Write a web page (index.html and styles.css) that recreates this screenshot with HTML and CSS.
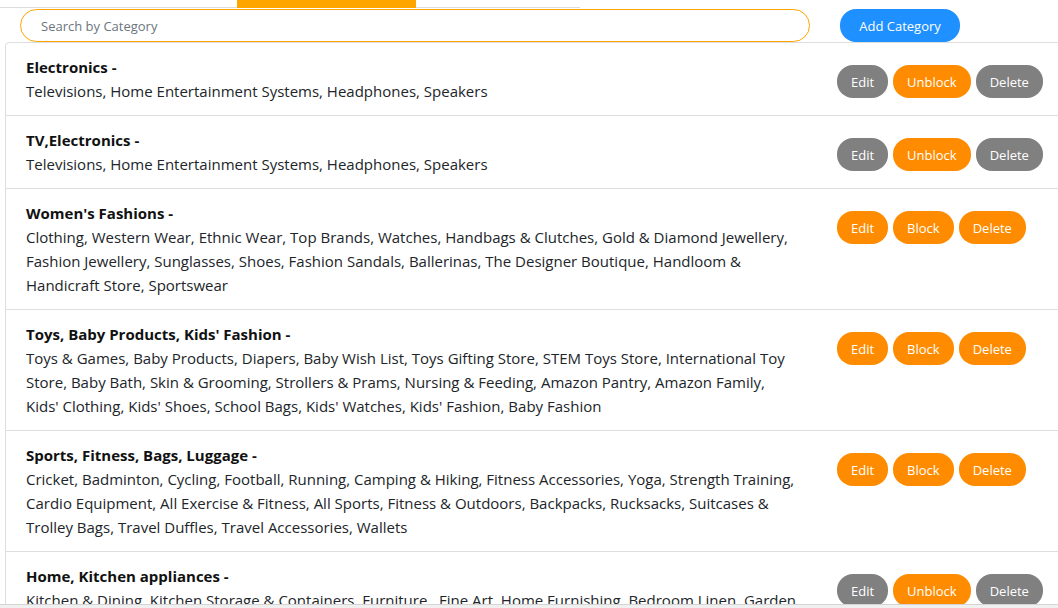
FILE: index.html
```html
<!DOCTYPE html>
<html lang="en">
<head>
<meta charset="utf-8">
<title>Categories</title>
<link rel="stylesheet" href="styles.css">
</head>
<body>
<div class="tabs">
  <div class="tab-line">
    <span class="tab tab-gap"></span>
    <span class="tab tab-active"></span>
  </div>
</div>
<div class="toolbar">
  <input class="search" type="text" placeholder="Search by Category">
  <button class="btn-add">Add Category</button>
</div>
<div class="list">
  <div class="row">
    <div class="info">
      <div class="title">Electronics -</div>
      <div class="desc">Televisions, Home Entertainment Systems, Headphones, Speakers</div>
    </div>
    <div class="actions">
      <button class="btn gray">Edit</button>
      <button class="btn orange">Unblock</button>
      <button class="btn gray">Delete</button>
    </div>
  </div>
  <div class="row">
    <div class="info">
      <div class="title">TV,Electronics -</div>
      <div class="desc">Televisions, Home Entertainment Systems, Headphones, Speakers</div>
    </div>
    <div class="actions">
      <button class="btn gray">Edit</button>
      <button class="btn orange">Unblock</button>
      <button class="btn gray">Delete</button>
    </div>
  </div>
  <div class="row">
    <div class="info">
      <div class="title">Women's Fashions -</div>
      <div class="desc">Clothing, Western Wear, Ethnic Wear, Top Brands, Watches, Handbags &amp; Clutches, Gold &amp; Diamond Jewellery, Fashion Jewellery, Sunglasses, Shoes, Fashion Sandals, Ballerinas, The Designer Boutique, Handloom &amp; Handicraft Store, Sportswear</div>
    </div>
    <div class="actions">
      <button class="btn orange">Edit</button>
      <button class="btn orange">Block</button>
      <button class="btn orange">Delete</button>
    </div>
  </div>
  <div class="row">
    <div class="info">
      <div class="title">Toys, Baby Products, Kids' Fashion -</div>
      <div class="desc">Toys &amp; Games, Baby Products, Diapers, Baby Wish List, Toys Gifting Store, STEM Toys Store, International Toy Store, Baby Bath, Skin &amp; Grooming, Strollers &amp; Prams, Nursing &amp; Feeding, Amazon Pantry, Amazon Family, Kids'&nbsp;Clothing, Kids' Shoes, School Bags, Kids' Watches, Kids' Fashion, Baby Fashion</div>
    </div>
    <div class="actions">
      <button class="btn orange">Edit</button>
      <button class="btn orange">Block</button>
      <button class="btn orange">Delete</button>
    </div>
  </div>
  <div class="row">
    <div class="info">
      <div class="title">Sports, Fitness, Bags, Luggage -</div>
      <div class="desc">Cricket, Badminton, Cycling, Football, Running, Camping &amp; Hiking, Fitness Accessories, Yoga, Strength Training, Cardio Equipment, All Exercise &amp; Fitness, All Sports, Fitness &amp; Outdoors, Backpacks, Rucksacks, Suitcases &amp; Trolley Bags, Travel Duffles, Travel Accessories, Wallets</div>
    </div>
    <div class="actions">
      <button class="btn orange">Edit</button>
      <button class="btn orange">Block</button>
      <button class="btn orange">Delete</button>
    </div>
  </div>
  <div class="row">
    <div class="info">
      <div class="title">Home, Kitchen appliances -</div>
      <div class="desc">Kitchen &amp; Dining, Kitchen Storage &amp; Containers, Furniture , Fine Art, Home Furnishing, Bedroom Linen, Garden &amp; Outdoors, Home Improvement, Indoor Lighting</div>
    </div>
    <div class="actions">
      <button class="btn gray">Edit</button>
      <button class="btn orange">Unblock</button>
      <button class="btn gray">Delete</button>
    </div>
  </div>
</div>
<div class="hscroll"></div>
</body>
</html>
```
FILE: styles.css
```css
html, body {
  margin: 0;
  padding: 0;
  overflow: hidden;
  background: #fff;
  font-family: "Open Sans", "Noto Sans", sans-serif;
  color: #212529;
}

.tabs {
  height: 8px;
}

.tab-line {
  width: 580px;
  height: 7px;
  border-bottom: 1px solid #dcdcdc;
  display: flex;
}

.tab-gap {
  width: 237px;
}

.tab-active {
  width: 179px;
  height: 8px;
  background: #ffa500;
}

.toolbar {
  display: flex;
  align-items: center;
  padding: 1px 0 0 20px;
  height: 33px;
}

.search {
  box-sizing: border-box;
  width: 790px;
  height: 33px;
  border: 1px solid #ffa500;
  border-radius: 17px;
  padding: 0 20px;
  font-family: inherit;
  font-size: 13px;
  color: #495057;
  outline: none;
}

.search::placeholder {
  color: #6c757d;
}

.btn-add {
  margin-left: 30px;
  width: 120px;
  height: 33px;
  border: none;
  border-radius: 16px;
  background: #1e90ff;
  color: #fff;
  font-family: inherit;
  font-size: 13px;
  padding: 0;
}

.list {
  margin-left: 5px;
  width: 1080px;
  border: 1px solid #dedede;
  border-radius: 4px;
}

.row {
  display: flex;
  padding: 12px 20px;
  border-bottom: 1px solid #dedede;
}

.info {
  flex: 0 0 780px;
  margin-right: 31px;
  font-size: 15px;
  line-height: 24px;
}

.title {
  font-weight: 700;
  color: #111;
}

.desc {
  color: #212529;
}

.actions {
  padding-top: 10px;
  display: flex;
  gap: 5px;
  align-items: flex-start;
}

.btn {
  height: 33px;
  border: none;
  border-radius: 16px;
  padding: 0 14px;
  color: #fff;
  font-family: inherit;
  font-size: 13px;
}

.btn.gray {
  background: #808080;
}

.btn.orange {
  background: #ff8c00;
}

.hscroll {
  position: fixed;
  left: 0;
  right: 0;
  bottom: 0;
  height: 3px;
  background: #f0f0f0;
  border-top: 1px solid #d4d4d4;
}
```
